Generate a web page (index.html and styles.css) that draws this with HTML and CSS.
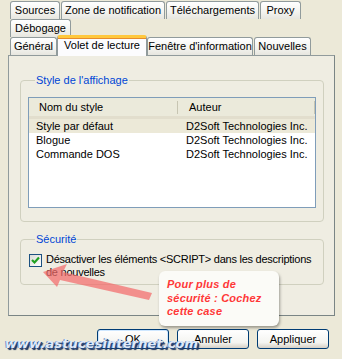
FILE: index.html
```html
<!DOCTYPE html>
<html lang="fr">
<head>
<meta charset="utf-8">
<link rel="stylesheet" href="styles.css">
</head>
<body>
<div class="dialog">
  <div class="tabrow">
    <div class="tab w-sources">Sources</div>
    <div class="tab w-zone">Zone de notification</div>
    <div class="tab w-tele">Téléchargements</div>
    <div class="tab w-proxy">Proxy</div>
  </div>
  <div class="tabrow">
    <div class="tab w-debog">Débogage</div>
  </div>
  <div class="tabrow">
    <div class="tab w-general">Général</div>
    <div class="tab tab-active w-volet">Volet de lecture</div>
    <div class="tab w-fenetre">Fenêtre d'information</div>
    <div class="tab w-nouv">Nouvelles</div>
  </div>
  <div class="panel">
    <fieldset class="group group-style">
      <legend>Style de l'affichage</legend>
      <div class="listbox">
        <div class="lheader">
          <div class="hcell hcell-name">Nom du style</div>
          <div class="hcell hcell-author">Auteur</div>
        </div>
        <div class="lrow lrow-sel"><span class="c-name">Style par défaut</span><span class="c-author">D2Soft Technologies Inc.</span></div>
        <div class="lrow"><span class="c-name">Blogue</span><span class="c-author">D2Soft Technologies Inc.</span></div>
        <div class="lrow"><span class="c-name">Commande DOS</span><span class="c-author">D2Soft Technologies Inc.</span></div>
      </div>
    </fieldset>
    <fieldset class="group group-sec">
      <legend>Sécurité</legend>
      <div class="checkline">
        <span class="checkbox"><svg width="11" height="11" viewBox="0 0 11 11"><path d="M2 5 L4.5 7.5 L9 2.5" fill="none" stroke="#21a121" stroke-width="2.2"/></svg></span>
        <span class="checklabel">Désactiver les éléments &lt;SCRIPT&gt; dans les descriptions<br>de nouvelles</span>
      </div>
    </fieldset>
  </div>
  <div class="buttons">
    <div class="btn btn-default">OK</div>
    <div class="btn">Annuler</div>
    <div class="btn">Appliquer</div>
  </div>

  <svg class="arrow" width="342" height="359" viewBox="0 0 342 359">
    <polygon points="43,272 67,264 63,272 152,293 149,300 60,280 57,287" fill="#f26b6b" opacity="0.72"/>
  </svg>
  <div class="callout">Pour plus de<br>sécurité : Cochez<br>cette case</div>
  <div class="watermark">www.astucesinternet.com</div>
</div>
</body>
</html>
```

FILE: styles.css
```css
html, body {
  margin: 0;
  padding: 0;
  background: #ece9d8;
}
body {
  font-family: "Liberation Sans", Arial, sans-serif;
  font-size: 11px;
  color: #000;
}
.dialog {
  position: relative;
  width: 342px;
  height: 359px;
  overflow: hidden;
  padding-top: 1px;
  box-sizing: border-box;
}
.tabrow {
  display: flex;
  gap: 1px;
  padding-left: 10px;
  height: 18px;
  align-items: flex-end;
}
.tab {
  box-sizing: border-box;
  height: 18px;
  border: 1px solid #919b9c;
  border-bottom: none;
  border-radius: 3px 3px 0 0;
  background: linear-gradient(#ffffff, #f3f3ef 60%, #e7e6df);
  text-align: center;
  line-height: 17px;
  white-space: nowrap;
}
.tab-active {
  height: 21px;
  margin-bottom: -1px;
  margin-left: -1px;
  margin-right: -1px;
  background: #fcfcfe;
  border-top: 3px solid #ffc83c;
  line-height: 15px;
  position: relative;
  z-index: 2;
  box-shadow: inset 0 1px 0 #e68b2c;
}
.w-sources { width: 50px; }
.w-zone { width: 104px; }
.w-tele { width: 93px; }
.w-proxy { width: 41px; }
.w-debog { width: 61px; }
.w-general { width: 47px; }
.w-volet { width: 90px; }
.w-fenetre { width: 106px; }
.w-nouv { width: 57px; }

.panel {
  position: relative;
  z-index: 1;
  margin-left: 8px;
  width: 327px;
  height: 261px;
  box-sizing: border-box;
  border: 1px solid #919b9c;
  border-right-color: #7a8585;
  border-bottom-color: #7a8585;
  background: #efede2;
  padding: 0 10px 0 11px;
}
.group {
  margin: 0;
  border: 1px solid #d0d0bf;
  border-radius: 4px;
  padding: 0 7px;
}
.group legend {
  color: #0046d5;
  padding: 0 1px;
  margin-left: 7px;
  line-height: 13px;
}
.group-style {
  margin-top: 18px;
  padding-top: 10px;
  padding-bottom: 13px;
}
.listbox {
  height: 111px;
  box-sizing: border-box;
  border: 1px solid #7f9db9;
  background: #fff;
}
.lheader {
  display: flex;
  height: 21px;
  box-sizing: border-box;
  background: #ebeadb;
  border-bottom: 3px solid #e2decd;
  box-shadow: 0 1px 0 #cbc7b8;
}
.hcell {
  line-height: 19px;
  box-sizing: border-box;
  position: relative;
}
.hcell-name {
  width: 149px;
  padding-left: 10px;
}
.hcell-name::after {
  content: "";
  position: absolute;
  right: 0;
  top: 3px;
  height: 13px;
  border-right: 1px solid #c7c5b2;
}
.hcell-author {
  flex: 1;
  padding-left: 11px;
}
.hcell-author::after {
  content: "";
  position: absolute;
  right: 0;
  top: 3px;
  height: 13px;
  border-right: 1px solid #c7c5b2;
}
.lrow {
  display: flex;
  height: 14px;
  line-height: 14px;
}
.lrow-sel { background: #ece9d8; }
.c-name {
  width: 149px;
  padding-left: 7px;
  box-sizing: border-box;
}
.c-author {
  padding-left: 8px;
}
.group-sec {
  margin-top: 11px;
  padding-top: 7px;
  padding-bottom: 5px;
}
.checkline {
  display: flex;
  align-items: flex-start;
  gap: 4px;
  padding-left: 1px;
}
.checkbox {
  flex: none;
  width: 13px;
  height: 13px;
  box-sizing: border-box;
  border: 1px solid #1c5180;
  background: linear-gradient(135deg, #dcdcd7, #ffffff);
  display: flex;
  align-items: center;
  justify-content: center;
  margin-top: 1px;
}
.checklabel {
  line-height: 13px;
  white-space: nowrap;
  letter-spacing: -0.25px;
}
.buttons {
  display: flex;
  justify-content: flex-end;
  gap: 8px;
  padding-right: 13px;
  margin-top: 13px;
}
.btn {
  width: 72px;
  height: 20px;
  box-sizing: border-box;
  border: 1px solid #003c74;
  border-radius: 3px;
  background: linear-gradient(#ffffff, #f4f4f0 70%, #d6d0c5);
  text-align: center;
  line-height: 18px;
}
.btn-default {
  box-shadow: inset 0 0 0 1px #cee7ff, inset 0 -1px 0 1px #a6c4eb;
}
.arrow {
  position: absolute;
  left: 0;
  top: 0;
  pointer-events: none;
  z-index: 5;
}
.callout {
  position: absolute;
  left: 159px;
  top: 271px;
  width: 120px;
  height: 55px;
  box-sizing: border-box;
  padding: 7px 0 0 8px;
  background: #fbfbf7;
  border-radius: 6px;
  box-shadow: 1px 2px 3px rgba(0,0,0,0.35);
  color: #ff3838;
  font-weight: bold;
  font-style: italic;
  font-size: 11px;
  line-height: 13.5px;
  letter-spacing: 0.2px;
  z-index: 6;
}
.watermark {
  position: absolute;
  left: 5px;
  top: 336px;
  font-family: "DejaVu Sans", Verdana, sans-serif;
  font-weight: bold;
  font-style: italic;
  font-size: 13px;
  letter-spacing: 0.1px;
  color: #dfeafa;
  text-shadow: 1px 1px 0 #24477f, -1px 0 0 #6f8fbf, 2px 2px 1px #1a2f5a;
  z-index: 7;
}
```
